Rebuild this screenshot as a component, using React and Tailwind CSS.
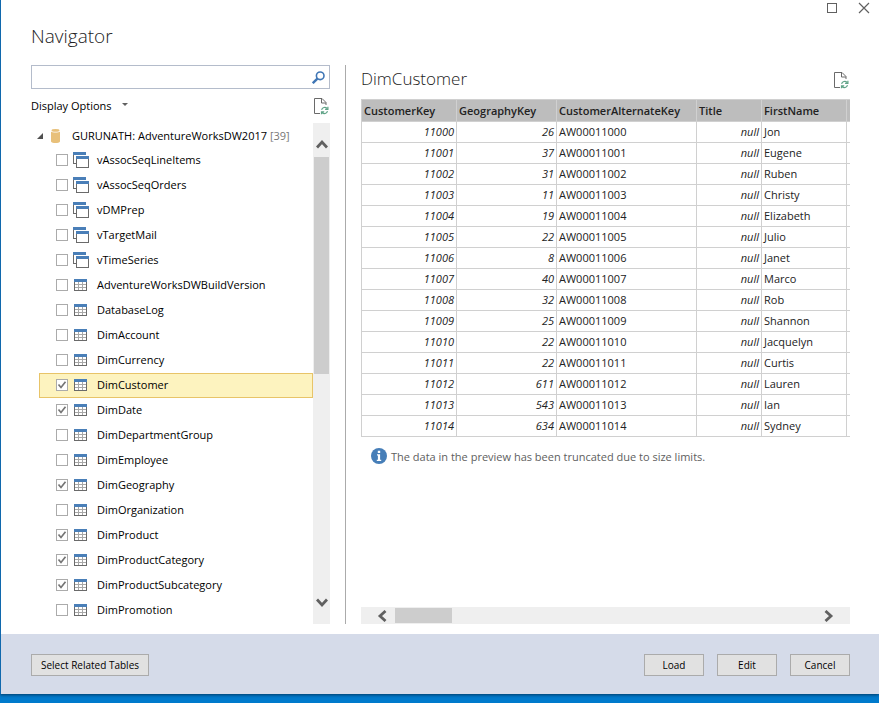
import React, { useState } from "react";

const views = ["vAssocSeqLineItems", "vAssocSeqOrders", "vDMPrep", "vTargetMail", "vTimeSeries"];

const tables = [
  "AdventureWorksDWBuildVersion",
  "DatabaseLog",
  "DimAccount",
  "DimCurrency",
  "DimCustomer",
  "DimDate",
  "DimDepartmentGroup",
  "DimEmployee",
  "DimGeography",
  "DimOrganization",
  "DimProduct",
  "DimProductCategory",
  "DimProductSubcategory",
  "DimPromotion",
];

const items = [
  ...views.map((name) => ({ name, type: "view" })),
  ...tables.map((name) => ({ name, type: "table" })),
];

const customers = [
  [11000, 26, "Jon"],
  [11001, 37, "Eugene"],
  [11002, 31, "Ruben"],
  [11003, 11, "Christy"],
  [11004, 19, "Elizabeth"],
  [11005, 22, "Julio"],
  [11006, 8, "Janet"],
  [11007, 40, "Marco"],
  [11008, 32, "Rob"],
  [11009, 25, "Shannon"],
  [11010, 22, "Jacquelyn"],
  [11011, 22, "Curtis"],
  [11012, 611, "Lauren"],
  [11013, 543, "Ian"],
  [11014, 634, "Sydney"],
];

const columns = [
  { title: "CustomerKey", width: "w-[95px]" },
  { title: "GeographyKey", width: "w-[100px]" },
  { title: "CustomerAlternateKey", width: "w-[140px]" },
  { title: "Title", width: "w-[65px]" },
  { title: "FirstName", width: "w-[85px]" },
];

function ViewIcon() {
  return (
    <svg width="16" height="16" viewBox="0 0 16 16" shapeRendering="crispEdges">
      <path d="M0 0h13v3H0z" fill="#4a7fb8" />
      <path d="M0 3h1v8h2v1H0z" fill="#6a6a6a" />
      <path d="M3 4h13v3H3z" fill="#4a7fb8" />
      <path d="M3.5 7v8.5h12V7" fill="none" stroke="#6a6a6a" />
    </svg>
  );
}

function TableIcon() {
  return (
    <svg width="13" height="12" viewBox="0 0 13 12" shapeRendering="crispEdges">
      <path d="M0 3h13v9H0z" fill="#fff" />
      <path d="M1 5.5h11M1 8.5h11M4.5 3v8M8.5 3v8" stroke="#a8a8a8" />
      <path d="M.5 3v8.5h12V3" fill="none" stroke="#6a6a6a" />
      <path d="M0 0h13v3H0z" fill="#4a7fb8" />
    </svg>
  );
}

function RefreshPageIcon() {
  return (
    <svg width="15" height="17" viewBox="0 0 15 17" fill="none">
      <path d="M6 15.5H.5V.5H8l4 4V7" stroke="#6a6a6a" />
      <path d="M7.5.5v4.5H12" stroke="#6a6a6a" />
      <path d="M7.6 11.8A3.2 3.2 0 0 1 13 10.3M13.9 8.7v2.6h-2.8M13.5 13.2a3.2 3.2 0 0 1-5.4 1.4M7.5 16.3v-2.5h2.7" stroke="#5fa387" strokeWidth="1.2" />
    </svg>
  );
}

function Chevron({ d, w, h }) {
  return (
    <svg width={w} height={h} viewBox={`0 0 ${w} ${h}`} fill="none">
      <path d={d} stroke="#606060" strokeWidth="2.8" />
    </svg>
  );
}

function TreeItem({ item, checked, selected, onToggle, onSelect }) {
  return (
    <li
      onClick={onSelect}
      className={`flex h-[25px] items-center border pb-px pl-4 ${
        selected ? "border-[#e8c468] bg-[#fdf3bf]" : "border-transparent"
      }`}
    >
      <span className="relative flex">
        <input
          id={item.name}
          type="checkbox"
          checked={checked}
          onChange={onToggle}
          className="size-3 appearance-none border border-[#ababab] bg-white"
        />
        {checked && (
          <svg className="pointer-events-none absolute inset-0" width="12" height="12" viewBox="0 0 12 12" fill="none">
            <path d="M2.5 5.5 5 8.5 9.5 2.8" stroke="#757575" strokeWidth="1.7" />
          </svg>
        )}
      </span>
      <span className={`flex w-[23px] shrink-0 ${item.type === "view" ? "ml-[5px] mr-px" : "ml-[6px]"}`}>
        {item.type === "view" ? <ViewIcon /> : <TableIcon />}
      </span>
      <label htmlFor={item.name} className="whitespace-nowrap leading-[18px]">
        {item.name}
      </label>
    </li>
  );
}

function DialogButton({ children, className }) {
  return (
    <button className={`h-[22px] border border-[#ababab] bg-[#e1e1e1] leading-5 text-black ${className}`}>
      {children}
    </button>
  );
}

export default function App() {
  const [selected, setSelected] = useState("DimCustomer");
  const [checked, setChecked] = useState([
    "DimCustomer",
    "DimDate",
    "DimGeography",
    "DimProduct",
    "DimProductCategory",
    "DimProductSubcategory",
  ]);

  const toggle = (name) => {
    setChecked(checked.includes(name) ? checked.filter((n) => n !== name) : [...checked, name]);
  };

  return (
    <div className="flex min-h-screen flex-col bg-[#007acc] pb-[9px] font-['Open_Sans','Noto_Sans',sans-serif] text-[11px] leading-4 text-black">
      <div className="flex flex-1 flex-col border-l border-[#1068ad] bg-white shadow-[0_1px_3px_#003a66]">
        {/* Window controls */}
        <header className="flex h-4 justify-end gap-5 pr-[9px]">
          <button aria-label="Maximize" className="flex items-center">
            <svg width="12" height="12" viewBox="0 0 12 12" fill="none" shapeRendering="crispEdges">
              <path d="M1.5 1.5h9v9h-9z" stroke="#606060" />
            </svg>
          </button>
          <button aria-label="Close" className="flex items-center">
            <svg width="12" height="12" viewBox="0 0 12 12" fill="none">
              <path d="m1 1 10 10M11 1 1 11" stroke="#606060" strokeWidth="1.2" />
            </svg>
          </button>
        </header>
        <h1 className="ml-[30px] mt-2 h-[41px] text-[19px] font-light leading-6 text-[#222]">Navigator</h1>

        <main className="flex flex-1 pb-[10px] pl-[30px] pr-[29px]">
          {/* Object tree */}
          <section className="flex w-[299px] shrink-0 flex-col">
            <div className="flex h-6 items-center border border-[#b4bccb] pr-1">
              <input aria-label="Search" type="text" className="min-w-0 flex-1 px-1 outline-none" />
              <button aria-label="Run search">
                <svg width="13" height="13" viewBox="0 0 13 13" fill="none" stroke="#3f76b5">
                  <circle cx="8.2" cy="4.8" r="3.8" strokeWidth="1.6" />
                  <path d="M5.4 7.6.8 12.2" strokeWidth="2.4" />
                </svg>
              </button>
            </div>
            <div className="flex h-[34px] items-center justify-between pr-px">
              <button className="flex items-center gap-[10px]">
                Display Options
                <svg width="6" height="3" viewBox="0 0 6 3" className="mb-[3px]">
                  <path d="M0 0h6L3 3z" fill="#606060" />
                </svg>
              </button>
              <button aria-label="Refresh tree">
                <RefreshPageIcon />
              </button>
            </div>
            <div className="flex flex-1">
              <ul className="min-w-0 flex-1 pl-2">
                <li className="flex h-[25px] items-center whitespace-nowrap">
                  <svg width="6" height="6" viewBox="0 0 6 6" className="-ml-[2px]">
                    <path d="M6 0v6H0z" fill="#505050" />
                  </svg>
                  <svg width="9" height="14" viewBox="0 0 9 14" className="ml-2 mr-3 shrink-0">
                    <path d="M0 2.5c1 1.3 8 1.3 9 0v10c-1 2-8 2-9 0z" fill="#e8c07a" />
                    <ellipse cx="4.5" cy="1.4" rx="4" ry="1.3" fill="#e8c07a" />
                  </svg>
                  GURUNATH: AdventureWorksDW2017&nbsp;<span className="text-[#777]">[39]</span>
                </li>
                {items.map((item) => (
                  <TreeItem
                    key={item.name}
                    item={item}
                    checked={checked.includes(item.name)}
                    selected={selected === item.name}
                    onToggle={() => toggle(item.name)}
                    onSelect={() => setSelected(item.name)}
                  />
                ))}
              </ul>
              <div className="flex w-[17px] flex-col items-stretch bg-[#efefef] px-px">
                <button aria-label="Scroll up" className="flex h-[34px] items-center justify-center pt-2">
                  <Chevron w={12} h={10} d="M1 8.5l5-5.5 5 5.5" />
                </button>
                <div className="flex-1">
                  <div className="h-1/2 bg-[#cdcdcd]" />
                </div>
                <button aria-label="Scroll down" className="flex h-[34px] items-center justify-center pb-2">
                  <Chevron w={12} h={10} d="M1 1.5 6 7l5-5.5" />
                </button>
              </div>
            </div>
          </section>

          <div className="mx-[15px] w-px shrink-0 bg-[#ababab]" />

          {/* Data preview */}
          <section className="flex min-w-0 flex-1 flex-col">
            <div className="flex h-[34px] items-center justify-between pb-[6px] pr-px">
              <h2 className="text-[17px] font-light leading-6 text-[#222]">DimCustomer</h2>
              <button aria-label="Refresh preview" className="pt-[3px]">
                <RefreshPageIcon />
              </button>
            </div>
            <table className="w-full table-fixed border-collapse text-[#222]">
              <thead>
                <tr className="h-[22px] bg-[#bdbdbd]">
                  {columns.map((column) => (
                    <th key={column.title} className={`border border-[#d0d0d0] px-[2px] text-left font-semibold ${column.width}`}>
                      {column.title}
                    </th>
                  ))}
                  <td className="border-y border-[#d0d0d0]" />
                </tr>
              </thead>
              <tbody>
                {customers.map(([key, geography, firstName]) => (
                  <tr key={key} className="h-[21px]">
                    <td className="border border-[#d0d0d0] px-[2px] text-right italic">{key}</td>
                    <td className="border border-[#d0d0d0] px-[2px] text-right italic">{geography}</td>
                    <td className="border border-[#d0d0d0] px-[2px]">AW000{key}</td>
                    <td className="border border-[#d0d0d0] px-[2px] text-right italic">null</td>
                    <td className="border border-[#d0d0d0] px-[2px]">{firstName}</td>
                    <td className="border-y border-[#d0d0d0]" />
                  </tr>
                ))}
              </tbody>
            </table>
            <div className="mt-[11px] flex gap-1 pl-[10px] text-[#606060]">
              <svg width="16" height="16" viewBox="0 0 16 16">
                <circle cx="8" cy="8" r="8" fill="#467eb8" />
                <path d="M6.8 2.8h2.4v2.2H6.8zM6 6.2h3.1v5.6h1.1V13H5.8v-1.2h1.1V7.4H6z" fill="#fff" />
              </svg>
              <p className="leading-[18px]">The data in the preview has been truncated due to size limits.</p>
            </div>
            <div className="mt-auto flex h-[17px] items-stretch bg-[#efefef] py-px">
              <button aria-label="Scroll left" className="flex w-[34px] items-center justify-center pl-2">
                <Chevron w={10} h={12} d="M8.5 1 3 6l5.5 5" />
              </button>
              <div className="flex-1">
                <div className="h-full w-[57px] bg-[#cdcdcd]" />
              </div>
              <button aria-label="Scroll right" className="flex w-[34px] items-center justify-center pr-2">
                <Chevron w={10} h={12} d="M1.5 1 7 6l-5.5 5" />
              </button>
            </div>
          </section>
        </main>

        <footer className="flex h-[60px] items-center justify-between bg-[#d5dbe9] pl-[30px] pr-[29px] pt-[2px]">
          <DialogButton className="w-[118px] text-[10px]">Select Related Tables</DialogButton>
          <div className="flex gap-[13px] text-[10px]">
            <DialogButton className="w-[60px]">Load</DialogButton>
            <DialogButton className="w-[60px]">Edit</DialogButton>
            <DialogButton className="w-[60px]">Cancel</DialogButton>
          </div>
        </footer>
      </div>
    </div>
  );
}
